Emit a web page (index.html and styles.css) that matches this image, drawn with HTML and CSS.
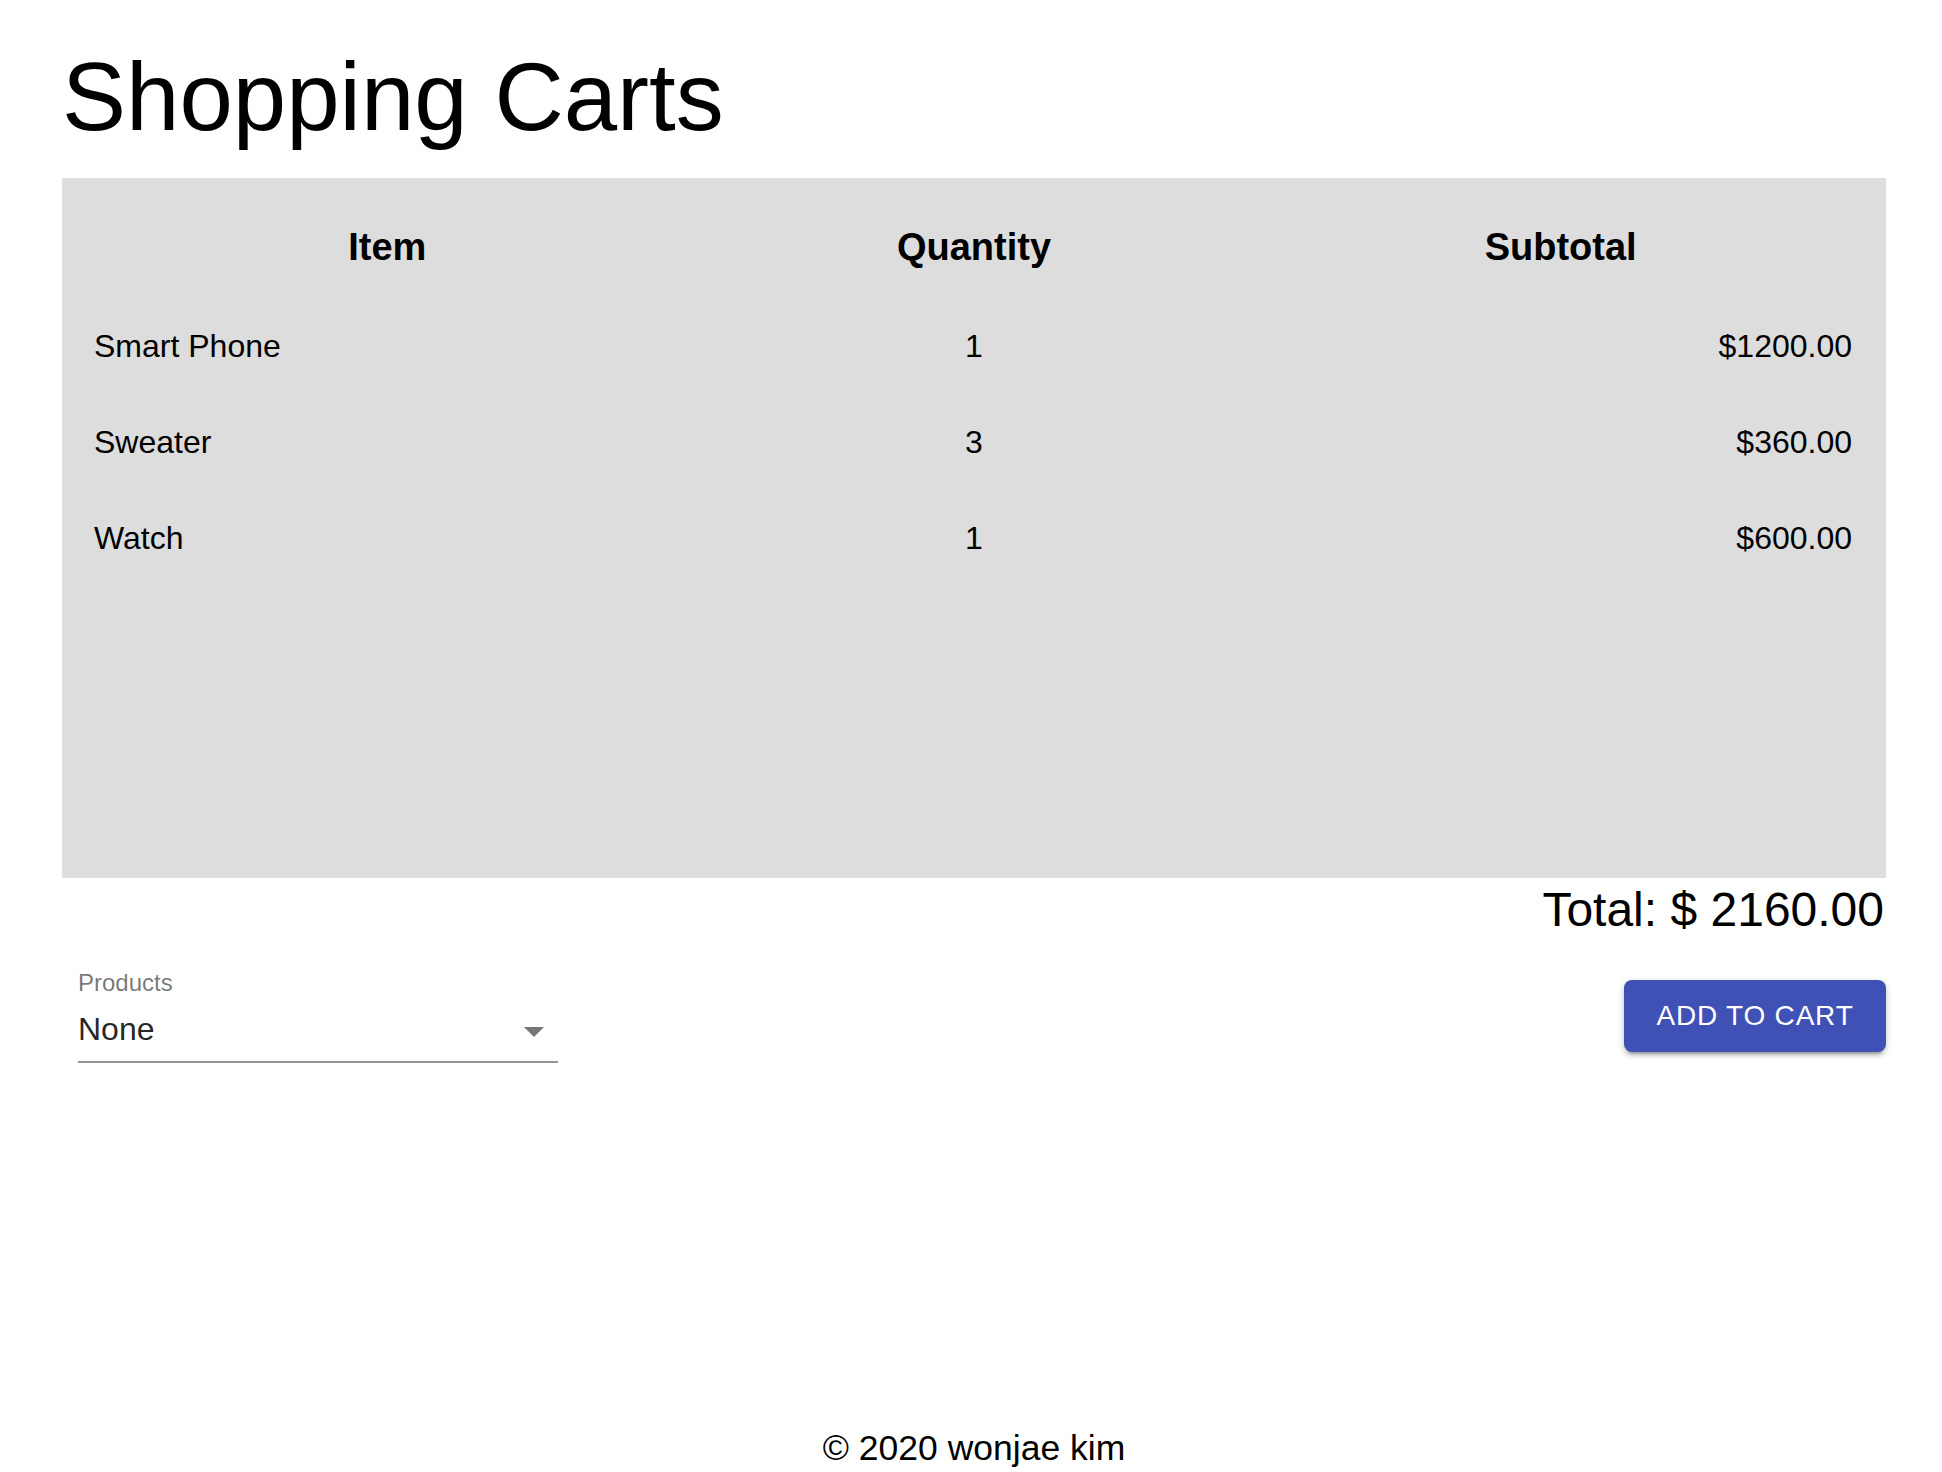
FILE: index.html
```html
<!DOCTYPE html>
<html lang="en">
<head>
<meta charset="utf-8">
<title>Shopping Carts</title>
<link rel="stylesheet" href="styles.css">
</head>
<body>
  <main class="page">
    <h1 class="title">Shopping Carts</h1>
    <section class="cart-box">
      <table class="cart-table">
        <thead>
          <tr>
            <th>Item</th>
            <th>Quantity</th>
            <th>Subtotal</th>
          </tr>
        </thead>
        <tbody>
          <tr>
            <td class="c-item">Smart Phone</td>
            <td class="c-qty">1</td>
            <td class="c-sub">$1200.00</td>
          </tr>
          <tr>
            <td class="c-item">Sweater</td>
            <td class="c-qty">3</td>
            <td class="c-sub">$360.00</td>
          </tr>
          <tr>
            <td class="c-item">Watch</td>
            <td class="c-qty">1</td>
            <td class="c-sub">$600.00</td>
          </tr>
        </tbody>
      </table>
    </section>
    <div class="total">Total: $ 2160.00</div>
    <div class="actions">
      <div class="select-field">
        <label class="select-label">Products</label>
        <div class="select-input">
          <span class="select-value">None</span>
          <svg class="select-arrow" viewBox="0 0 24 24" width="48" height="48" aria-hidden="true"><path d="M7 10l5 5 5-5z"></path></svg>
        </div>
      </div>
      <button class="add-btn" type="button">Add to cart</button>
    </div>
  </main>
  <footer class="footer">© 2020 wonjae kim</footer>
</body>
</html>
```
FILE: styles.css
```css
html, body {
  margin: 0;
  padding: 0;
}

body {
  min-height: 100vh;
  box-sizing: border-box;
  display: flex;
  flex-direction: column;
  padding: 41px 56px 4px 62px;
  font-family: "Liberation Sans", Helvetica, Arial, sans-serif;
  color: #000;
  background: #fff;
}

.page {
  display: flex;
  flex-direction: column;
}

.title {
  margin: 0 0 25px 0;
  font-size: 96px;
  font-weight: 400;
  line-height: 112px;
}

.cart-box {
  background: #dddddd;
  height: 700px;
  box-sizing: border-box;
  padding: 18px 32px 0 32px;
}

.cart-table {
  width: 100%;
  border-collapse: collapse;
  table-layout: fixed;
}

.cart-table th {
  font-size: 38px;
  font-weight: 700;
  line-height: 38px;
  padding: 32px 0;
  text-align: center;
}

.cart-table td {
  font-size: 32px;
  line-height: 32px;
  padding: 32px 0;
}

.c-item { text-align: left; }
.c-qty { text-align: center; }
.cart-table .c-sub { text-align: right; padding-right: 2px; }

.total {
  margin-top: 4px;
  text-align: right;
  font-size: 48px;
  line-height: 56px;
  padding-right: 2px;
}

.actions {
  display: flex;
  justify-content: space-between;
  align-items: flex-start;
}

.select-field {
  margin: 33px 0 0 16px;
  width: 480px;
  display: flex;
  flex-direction: column;
}

.select-label {
  font-size: 24px;
  line-height: 24px;
  color: rgba(0, 0, 0, 0.54);
}

.select-input {
  margin-top: 3px;
  display: flex;
  align-items: flex-start;
  padding: 12px 0 13px 0;
  border-bottom: 2px solid rgba(0, 0, 0, 0.42);
}

.select-value {
  flex: 1;
  font-size: 32px;
  line-height: 38px;
  color: rgba(0, 0, 0, 0.87);
}

.select-arrow {
  display: block;
  margin: -3px 0 -7px 0;
  fill: rgba(0, 0, 0, 0.54);
}

.add-btn {
  margin-top: 42px;
  width: 262px;
  height: 72px;
  padding: 12px 32px;
  border: none;
  border-radius: 8px;
  background: #3f51b5;
  color: #fff;
  font-family: "Liberation Sans", Helvetica, Arial, sans-serif;
  font-size: 28px;
  font-weight: 500;
  line-height: 48px;
  letter-spacing: 0.8px;
  text-transform: uppercase;
  box-shadow: 0 6px 2px -4px rgba(0, 0, 0, 0.2), 0 4px 4px 0 rgba(0, 0, 0, 0.14), 0 2px 10px 0 rgba(0, 0, 0, 0.12);
  cursor: pointer;
}

.footer {
  margin-top: auto;
  text-align: center;
  font-size: 35.5px;
  line-height: 40px;
}
```
